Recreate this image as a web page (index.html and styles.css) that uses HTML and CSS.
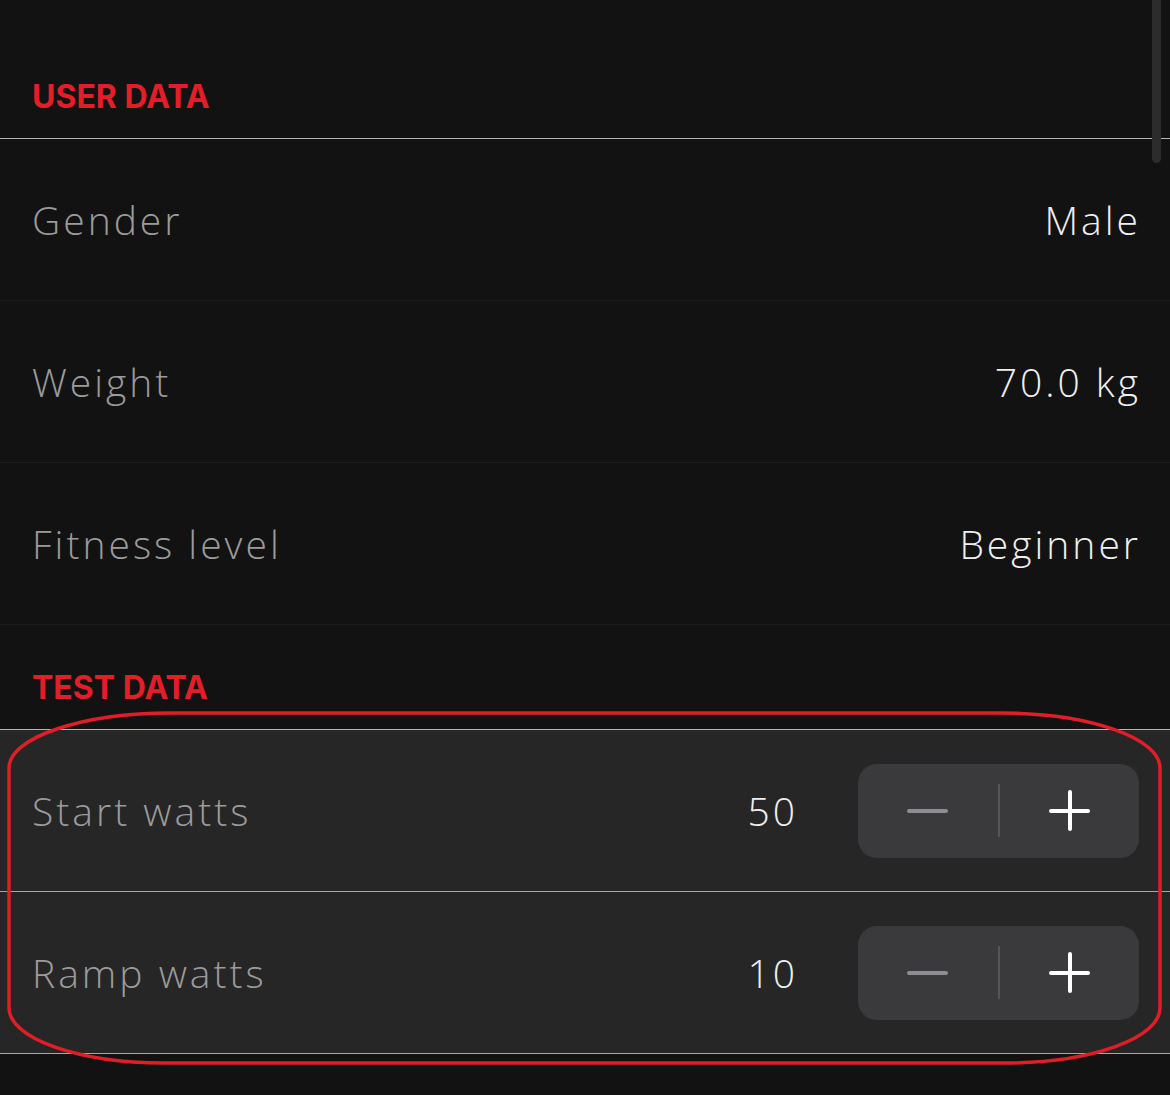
FILE: index.html
```html
<!DOCTYPE html>
<html lang="en">
  <head>
    <meta charset="UTF-8" />
    <meta name="viewport" content="width=device-width, initial-scale=1.0" />
    <title>Settings</title>
    <link rel="stylesheet" href="styles.css">
  </head>
  <body>
    <div class="screen">
      <div class="scrollbar"></div>

      <section class="group">
        <h2 class="group-title">USER DATA</h2>
        <div class="row">
          <span class="label">Gender</span>
          <span class="value">Male</span>
        </div>
        <div class="row">
          <span class="label">Weight</span>
          <span class="value">70.0 kg</span>
        </div>
        <div class="row">
          <span class="label">Fitness level</span>
          <span class="value">Beginner</span>
        </div>
      </section>

      <section class="group test">
        <h2 class="group-title">TEST DATA</h2>
        <div class="row">
          <span class="label">Start watts</span>
          <span class="value num">50</span>
          <div class="stepper">
            <button class="step minus"><span></span></button>
            <i class="step-divider"></i>
            <button class="step plus"><span></span></button>
          </div>
        </div>
        <div class="row">
          <span class="label">Ramp watts</span>
          <span class="value num">10</span>
          <div class="stepper">
            <button class="step minus"><span></span></button>
            <i class="step-divider"></i>
            <button class="step plus"><span></span></button>
          </div>
        </div>
      </section>

      <!-- hand-drawn highlight around the test data -->
      <svg class="highlight" width="1170" height="1095" viewBox="0 0 1170 1095">
        <path
          d="M172 713 H1000 A160 55 0 0 1 1160 768 V1008 A155 55 0 0 1 1005 1063 H164 A155 55 0 0 1 9 1008 V768 A162 55 0 0 1 172 713 Z"
          fill="none"
          stroke="#e11d27"
          stroke-width="3.5"
        />
      </svg>
    </div>
  </body>
</html>
```

FILE: styles.css
```css
body {
  margin: 0;
  background: #121212;
  font-family: "Open Sans", sans-serif;
}

.screen {
  position: relative;
  width: 1170px;
  height: 1095px;
  overflow: hidden;
  background: #121212;
}

.scrollbar {
  position: absolute;
  top: 0;
  left: 1152px;
  width: 9px;
  height: 163px;
  background: #2c2c2c;
  border-radius: 0 0 5px 5px;
}

.group-title {
  margin: 0;
  padding: 81px 32px 25px;
  height: 32px;
  font-family: Inter, sans-serif;
  font-size: 32px;
  line-height: 32px;
  font-weight: 700;
  color: #e21f29;
  border-bottom: 1px solid #b4b4b4;
}

.test .group-title {
  padding-top: 47px;
  padding-bottom: 25px;
}

.row {
  display: flex;
  align-items: center;
  height: 161px;
  padding: 0 29px 0 32px;
  border-bottom: 1px solid #1d1d1d;
}

.test .row {
  padding-right: 31px;
  background: #262626;
  border-bottom-color: #a6a6a6;
}

.label,
.value {
  font-size: 39px;
  font-weight: 300;
  letter-spacing: 3px;
}

.label {
  flex: 1;
  color: #9b9b9b;
}

.value {
  color: #efefef;
}

.value.num {
  margin-right: 60px;
}

.stepper {
  display: flex;
  align-items: center;
  width: 281px;
  height: 94px;
  background: #3a3a3d;
  border-radius: 19px;
}

.step {
  flex: 1;
  height: 100%;
  padding: 0;
  border: 0;
  background: none;
  display: flex;
  align-items: center;
  justify-content: center;
}

.step span {
  position: relative;
  display: block;
  width: 41px;
  height: 41px;
}

.step span::before,
.step span::after {
  content: "";
  position: absolute;
  border-radius: 2px;
}

.step span::before {
  left: 0;
  right: 0;
  top: 19px;
  height: 4px;
}

.minus span::before {
  background: #8d8d92;
}

.plus span::before,
.plus span::after {
  background: #fff;
}

.plus span::after {
  top: 0;
  bottom: 0;
  left: 19px;
  width: 4px;
}

.step-divider {
  width: 2px;
  height: 53px;
  background: #555558;
}

.highlight {
  position: absolute;
  top: 0;
  left: 0;
  pointer-events: none;
}
```
